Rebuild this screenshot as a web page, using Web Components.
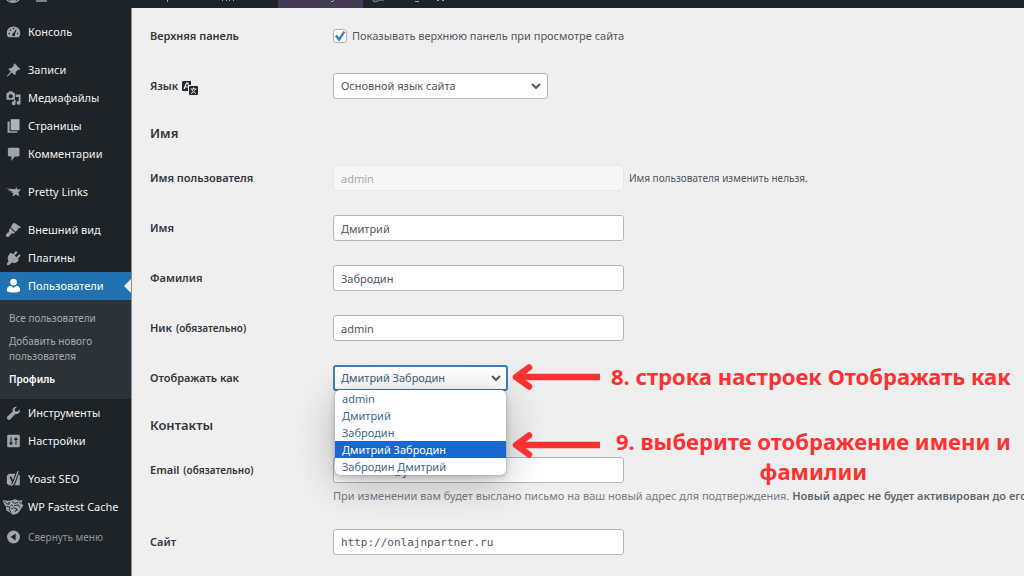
<!DOCTYPE html>
<html lang="ru">
<head>
<meta charset="utf-8">
<meta name="viewport" content="width=device-width, initial-scale=1">
<title>Профиль</title>
<style>
  html, body { margin: 0; height: 100%; }
  body { font: 11px/16px "Noto Sans", "Open Sans", sans-serif; color: #3c434a; background: #efefef; overflow: hidden; }
</style>
</head>
<body>
<profile-page></profile-page>

<script>
const ICONS = {
  dashboard: '<path fill="currentColor" d="M10 2a9.500 9.500 0 0 0-8.500 14l1 1.500h15l1-1.500A9.500 9.500 0 0 0 10 2z"/><g fill="#1d2327"><circle cx="10" cy="5" r="1.100"/><circle cx="5.500" cy="7.200" r="1.100"/><circle cx="4" cy="12" r="1.100"/><circle cx="16" cy="12" r="1.100"/><circle cx="10" cy="14" r="1.900"/><path d="M9 13l4.500-7 .9.600L11.500 15z"/></g>',
  pin: '<path fill="currentColor" d="M11.500 .5l8 8-1.500 1.500-1.500-.3-3.500 3.600c.5 1.900 0 3.200-1.200 4.200L7.500 13.700 1.500 19.400l-1-1L6 12.200 2.500 8.700c1.200-1.200 2.600-1.500 4.200-1.200L10.300 4l-.3-1.700z"/>',
  media: '<path fill="currentColor" fill-rule="evenodd" d="M0 2.500h2.500l1-2h5l1 2H12v10H0zM6 4.500a3 3 0 1 0 .01 6 3 3 0 0 0-.01-6zM13 5h7v12a2.800 2.800 0 1 1-2.500-2.800V8.500H13zM10.500 13h2.500v4.500a2.800 2.800 0 1 1-2.500-2.800z"/>',
  pages: '<path fill="currentColor" d="M6 .5h12.500V16H6zM1.500 3.500h3v14h11V19.500h-14z"/><path fill="#d2d5d8" opacity=".3" d="M6 .5h12.500V16H6z"/>',
  comments: '<path fill="currentColor" d="M4 1h12.500a2 2 0 0 1 2 2v8.500a2 2 0 0 1-2 2H12l-5 6.500v-6.500H4a2 2 0 0 1-2-2V3c0-1 1-2 2-2z"/>',
  star: '<path fill="currentColor" d="M-2 4.500l14.500 1.500 1.500-3 1.700 3.300 5.300-.3-4 4.500 1.500 6-5-3-5 3 1.200-4.800L5.500 9.800l4-.6L1 7l4-.5z"/>',
  brush: '<path fill="currentColor" d="M8.500 1.500l2.500-2 10 6.500-3.500 1.500-4.500 5.500-7-7zM5 7l7 7-2 1.500c-2-2-3-.5-4 1C4.500 19 2 21 0 19.500s-.5-4 1.500-5.500 3-2.500 2-4.500z"/>',
  plug: '<path fill="currentColor" d="M9.500 4.500l4-4.500 2.200 2-4 4.500 2.500 2.500 4-4.500 2 2-4 4.500 1.300 1.500c-2 4-5.500 5.500-9.700 4L3.500 20l-2.500.5-.5-2.500 2.500-3C.5 10.500 2 6 6 2.500z"/>',
  users: '<circle cx="10" cy="4.500" r="4.700" fill="currentColor"/><path fill="currentColor" d="M5.500 9.800l4.500 2.700 4.500-2.700c3.500.8 5 3 5 6.500v1.200c-4.500 2.500-14.500 2.500-19 0v-1.200c0-3.500 1.500-5.700 5-6.500z"/>',
  tools: '<path fill="currentColor" d="M19.200 5c.8 4-2.500 7.200-6.500 6.300l-7.200 7.500A2.800 2.800 0 0 1 1.300 15l7.500-7.300C8 3.500 11 .3 15 1l-3.300 3.300.5 3.200 3.200.5z"/>',
  settings: '<path fill="currentColor" d="M2.500 1h15A1.500 1.500 0 0 1 19 2.500v15a1.500 1.500 0 0 1-1.500 1.500h-15A1.500 1.500 0 0 1 1 17.500v-15A1.500 1.500 0 0 1 2.500 1z"/><path stroke="#1d2327" stroke-width="1.500" fill="none" d="M6.500 4.500v10M13.500 5v10.500"/><path fill="#1d2327" d="M3.500 12h6l-3 4zM10.500 8.500h6l-3-4z"/>',
  yoast: '<path fill="currentColor" d="M3.500 2.500h13L19 5v14H3L.5 16.500v-11z"/><path stroke="#1d2327" stroke-width="5" fill="none" d="M16 0L11 14c-1 3-2 5-4.500 5"/><path stroke="#1d2327" stroke-width="2.500" fill="none" d="M5.500 6.500L9.500 15"/><path stroke="currentColor" stroke-width="2" fill="none" d="M16.500 -1L11 14c-1 3-2 5-4.500 5"/>',
  cheetah: '<path fill="currentColor" d="M-5 0l5 1 5 0 7-2 6 2 5-1-2 4 3 4-3 4-3 5-4 3-5 1-4-3-5-3-1-6-3-4z"/><path fill="none" stroke="#1d2327" stroke-width="1.300" d="M-3 2l4 4 4-3M0 9l5 1-1 4 3 4M8 2l4 3 5-2M11 8l6-1 2 4M7 13l3-2 5 2-3 4M19 3l1 3M4 4l-1 3M13 15l3-1M6 7l3 1"/>',
  collapse: '<circle cx="10" cy="10" r="9.200" fill="currentColor"/><path fill="#1d2327" d="M13 5v10L6 10z"/>'
};

function define(name, html, setup) {
  const t = document.createElement('template');
  t.innerHTML = html;
  customElements.define(name, class extends HTMLElement {
    connectedCallback() {
      if (this.shadowRoot) return;
      this.attachShadow({ mode: 'open' }).append(t.content.cloneNode(true));
      if (setup) setup(this, this.shadowRoot);
    }
  });
}

/* Toolbar scrolled almost out of view: only the feet of its items remain. */
define('admin-bar', `
<style>
  :host { display: block; height: 8px; background: #1d2327; overflow: hidden; flex: none; }
  svg { display: block; }
</style>
<svg width="520" height="8" aria-hidden="true">
  <rect x="278" width="85" height="8" fill="#453a53"/>
  <g fill="none" stroke="#9ca2a7" stroke-width="1.500">
    <path d="M7 0c3 3 9 3 12 0M11 0v1h4V0M36 1h11"/>
    <path d="M373 0c1 3 5 1 6 0M379 0h5" stroke="#737a80"/>
  </g>
  <g fill="none" stroke="#a0a5aa">
    <path d="M167.500 0v2M222.500 0v1M226.500 0v1M229.500 0v1M233.500 0v1M331 1.500h2l1-1.500M415 1.500h4M437 .5h2M442 .5h2"/>
  </g>
</svg>`);

define('menu-item', `
<style>
  :host { display: block; color: #f0f0f1; }
  :host([gap]) { margin-top: 10px; }
  a, button { all: unset; box-sizing: border-box; display: flex; align-items: center; gap: 7px; width: 100%; height: 28px; padding-left: 6px; position: relative; cursor: pointer; white-space: nowrap; }
  svg { width: 15px; height: 14px; color: #a0a5aa; flex: none; overflow: visible; }
  :host([current]) a { background: #2271b1; color: #fff; }
  :host([current]) svg { color: #fff; }
  :host([current]) a::after { content: ""; position: absolute; right: 0; top: 7px; border: 7px solid transparent; border-right-color: #efefef; border-left-width: 0; }
  :host([muted]) { color: #8f9499; font-size: 10px; margin-top: 2px; }
</style>`, (el, root) => {
  const b = document.createElement(el.hasAttribute('muted') ? 'button' : 'a');
  if (b.tagName === 'A') b.href = '#'; else b.type = 'button';
  b.innerHTML = `<svg viewBox="0 0 20 20" aria-hidden="true">${ICONS[el.getAttribute('icon')]}</svg><slot></slot>`;
  root.append(b);
});

define('sub-menu', `
<style>
  :host { display: block; background: #2c3338; padding: 11px 9px 9px; }
  ::slotted(a) { display: block; color: #a3a8ad; text-decoration: none; font-size: 10px; line-height: 15px; margin-bottom: 8px; padding: 0 12px 0 0; }
  ::slotted(a[aria-current]) { color: #fff; font-weight: 600; margin: 0; padding-bottom: 3px; }
</style>
<slot></slot>`);

define('side-menu', `
<style>
  :host { display: block; background: #1d2327; padding-top: 10px; }
</style>
<nav aria-label="Меню">
  <menu-item icon="dashboard">Консоль</menu-item>
  <menu-item gap icon="pin">Записи</menu-item>
  <menu-item icon="media">Медиафайлы</menu-item>
  <menu-item icon="pages">Страницы</menu-item>
  <menu-item icon="comments">Комментарии</menu-item>
  <menu-item gap icon="star">Pretty Links</menu-item>
  <menu-item gap icon="brush">Внешний вид</menu-item>
  <menu-item icon="plug">Плагины</menu-item>
  <menu-item current icon="users">Пользователи</menu-item>
  <sub-menu>
    <a href="#">Все пользователи</a>
    <a href="#">Добавить нового пользователя</a>
    <a href="#" aria-current="page">Профиль</a>
  </sub-menu>
  <menu-item icon="tools">Инструменты</menu-item>
  <menu-item icon="settings">Настройки</menu-item>
  <menu-item gap icon="yoast">Yoast SEO</menu-item>
  <menu-item icon="cheetah">WP Fastest Cache</menu-item>
  <menu-item muted icon="collapse">Свернуть меню</menu-item>
</nav>`);

define('section-title', `
<style>
  :host { display: block; }
  h2 { margin: 0; padding: 12px 0 10px; font-size: 13px; line-height: 20px; font-weight: 600; color: #32373c; }
</style>
<h2><slot></slot></h2>`);

/* One settings row: label on the left, control and hint on the right. */
define('form-row', `
<style>
  :host { display: grid; grid-template-columns: 183px minmax(0, 1fr); padding: 12px 0; }
  label { display: flex; align-items: center; height: 26px; gap: 4px; font-weight: 600; color: #32373c; white-space: nowrap; }
  small { font-size: 10px; }
  label svg { margin-top: 4px; }
  .control { display: flex; align-items: center; gap: 5px; height: 26px; position: relative; font-size: 10px; white-space: nowrap; color: #50575e; }
  .control label { font-weight: 400; font-size: 11px; gap: 5px; color: #50575e; }
  input, select { box-sizing: border-box; height: 26px; margin: 0; padding: 0 7px; border: 1px solid #b4b7ba; border-radius: 3px; background: #fff; font: 11px/16px "Noto Sans", sans-serif; color: #50575e; }
  input[type=text], input[type=email], input[type=url] { width: 291px; }
  input:disabled { background: #f6f6f6; border-color: #e8e8e8; color: #a7aaad; }
  input[type=url] { font-family: "DejaVu Sans Mono", monospace; }
  input[type=checkbox] { appearance: none; width: 14px; height: 14px; padding: 0; display: grid; place-items: center; }
  input[type=checkbox]:checked::before { content: ""; width: 12px; height: 12px; background: #3582c4; clip-path: polygon(8% 52%, 24% 40%, 42% 62%, 78% 8%, 94% 18%, 46% 92%, 38% 92%); }
  select { appearance: none; width: 215px; background: #fff url("data:image/svg+xml,%3Csvg xmlns='http://www.w3.org/2000/svg' width='10' height='6' viewBox='0 0 10 6'%3E%3Cpath d='M1 1l4 4 4-4' fill='none' stroke='%2350575e' stroke-width='2'/%3E%3C/svg%3E") no-repeat right 6px center; }
  select.open { width: 175px; border: 2px solid #3b82b9; padding: 0 6px; color: #3d6482; background-position: right 5px center; }
  .hint { font-size: 11px; color: #787c82; margin: 5px 0 0; white-space: nowrap; height: 16px; }
  .hint b { font-weight: 600; color: #5f666c; }
</style>
<label for="f"></label>
<div><div class="control"></div></div>`, (el, root) => {
  const a = n => el.getAttribute(n);
  const label = root.querySelector('label'), control = root.querySelector('.control');
  label.textContent = a('label');
  if (el.hasAttribute('required')) label.insertAdjacentHTML('beforeend', '<small>(обязательно)</small>');
  if (el.hasAttribute('translate-mark')) label.insertAdjacentHTML('beforeend', `<svg width="16" height="14" viewBox="0 0 16 14" aria-hidden="true"><path fill="#23282d" d="M1 0h8v4H6v6H1a1 1 0 0 1-1-1V1z"/><path fill="none" stroke="#efefef" stroke-width="1.200" d="M2 8l2.500-6H6v2M3 6h3"/><rect x="7" y="5" width="9" height="9" rx="1" fill="#23282d"/><path fill="none" stroke="#efefef" d="M8.500 8h6M11.500 6.500V8M9 12.500c2-1 3.500-2.500 4-4M10 8.500c.5 2 2 3 4 4"/></svg>`);
  const kind = a('type');
  if (kind === 'checkbox') {
    control.innerHTML = '<label><input id="f" type="checkbox" checked><span></span></label>';
    control.querySelector('span').textContent = a('value');
  } else if (kind === 'select') {
    const opts = a('options').split('|');
    const s = document.createElement('select');
    s.id = 'f';
    for (const o of opts) s.add(new Option(o, o, o === a('value'), o === a('value')));
    if (el.hasAttribute('open')) s.className = 'open';
    control.append(s);
    if (el.hasAttribute('open')) {
      const list = document.createElement('option-list');
      list.setAttribute('options', a('options'));
      list.setAttribute('value', a('value'));
      control.append(list);
    }
  } else {
    const i = document.createElement('input');
    i.id = 'f'; i.type = kind || 'text'; i.value = a('value');
    i.disabled = el.hasAttribute('disabled');
    control.append(i);
    if (a('note')) control.append(a('note'));
  }
  if (a('hint')) {
    root.querySelector('div').insertAdjacentHTML('beforeend', '<p class="hint"></p>');
    const p = root.querySelector('.hint');
    p.append(a('hint') + ' ');
    const b = document.createElement('b');
    b.textContent = a('strong');
    p.append(b);
  }
});

define('option-list', `
<style>
  :host { position: absolute; left: 2px; top: 25px; width: 171px; z-index: 2; font-size: 11px; }
  ul { margin: 0; padding: 0; list-style: none; background: #fff; border-radius: 5px; overflow: hidden; box-shadow: 0 0 1px rgba(0,0,0,.5), 0 8px 40px rgba(0,0,0,.25), 0 2px 6px rgba(0,0,0,.2); }
  li { height: 17px; line-height: 17px; padding-left: 7px; color: #43698a; }
  li[aria-selected=true] { background: #1967d2; color: #fff; }
</style>
<ul role="listbox"></ul>`, (el, root) => {
  const ul = root.querySelector('ul');
  for (const o of el.getAttribute('options').split('|')) {
    const li = document.createElement('li');
    li.setAttribute('role', 'option');
    li.setAttribute('aria-selected', o === el.getAttribute('value'));
    li.textContent = o;
    ul.append(li);
  }
});

/* Red arrow with a caption, laid over the form. */
define('call-out', `
<style>
  :host { position: absolute; z-index: 3; display: flex; gap: var(--gap, 11px); color: #ff3131; font-size: 22px; line-height: 30px; font-weight: 700; text-align: center; white-space: nowrap; }
  svg { flex: none; margin-top: var(--drop, 3px); }
</style>
<svg width="88" height="26" viewBox="0 0 88 26" aria-hidden="true"><path d="M88 13H5" fill="none" stroke="#ff3131" stroke-width="6.500"/><path d="M17 3.500L4 13l13 9.500" fill="none" stroke="#ff3131" stroke-width="6.500" stroke-linecap="round" stroke-linejoin="round"/></svg>
<span><slot></slot></span>`);

define('profile-form', `
<style>
  :host { display: block; position: relative; padding: 3px 0 0 18px; overflow: hidden; border-left: 1px solid #8c8f94; box-sizing: border-box; }
  .tall { padding-bottom: 13px; }
  .first { left: 380px; top: 353px; }
  .second { left: 380px; top: 418px; --drop: 6px; --gap: 16px; }
</style>
<form-row label="Верхняя панель" type="checkbox" value="Показывать верхнюю панель при просмотре сайта"></form-row>
<form-row label="Язык" translate-mark type="select" value="Основной язык сайта" options="Основной язык сайта"></form-row>
<section-title>Имя</section-title>
<form-row label="Имя пользователя" value="admin" disabled note="Имя пользователя изменить нельзя."></form-row>
<form-row label="Имя" value="Дмитрий"></form-row>
<form-row label="Фамилия" value="Забродин"></form-row>
<form-row label="Ник" required value="admin"></form-row>
<form-row label="Отображать как" type="select" open value="Дмитрий Забродин" options="admin|Дмитрий|Забродин|Дмитрий Забродин|Забродин Дмитрий"></form-row>
<section-title>Контакты</section-title>
<form-row class="tall" label="Email" required type="email" value="azabrodin@yandex.ru" hint="При изменении вам будет выслано письмо на ваш новый адрес для подтверждения." strong="Новый адрес не будет активирован до его"></form-row>
<form-row label="Сайт" type="url" value="http://onlajnpartner.ru"></form-row>
<call-out class="first">8. строка настроек Отображать как</call-out>
<call-out class="second">9. выберите отображение имени и<br>фамилии</call-out>`);

define('profile-page', `
<style>
  :host { display: flex; flex-direction: column; min-height: 100vh; }
  main { flex: 1; display: grid; grid-template-columns: 131px minmax(0, 1fr); }
</style>
<admin-bar></admin-bar>
<main><side-menu></side-menu><profile-form></profile-form></main>`);
</script>
</body>
</html>
